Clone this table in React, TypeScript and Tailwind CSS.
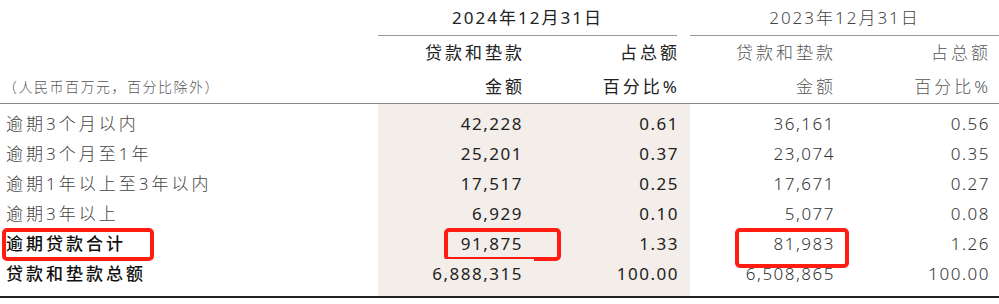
const ROWS = [
  { label: "逾期3个月以内", a: "42,228", b: "0.61", c: "36,161", d: "0.56" },
  { label: "逾期3个月至1年", a: "25,201", b: "0.37", c: "23,074", d: "0.35" },
  { label: "逾期1年以上至3年以内", a: "17,517", b: "0.25", c: "17,671", d: "0.27" },
  { label: "逾期3年以上", a: "6,929", b: "0.10", c: "5,077", d: "0.08" },
  { label: "逾期贷款合计", a: "91,875", b: "1.33", c: "81,983", d: "1.26", strong: true, mark: true },
  { label: "贷款和垫款总额", a: "6,888,315", b: "100.00", c: "6,508,865", d: "100.00", strong: true },
]

const shade = "bg-[#f3eeea]"

export default function App() {
  return (
    <div
      className="w-[999px] bg-white text-[17px] tracking-[3px]"
      style={{ fontFamily: '"Noto Sans", "Noto Sans CJK SC", sans-serif' }}
    >
      {/* 表头 */}
      <div className="grid grid-cols-[378px_156px_156px_156px_153px] border-b border-[#8a8a8a]">
        <div />
        <div className="col-span-2 mr-[13px] flex h-[36px] items-center justify-center border-b border-[#999] tracking-[2px] text-[#222]">
          2024年12月31日
        </div>
        <div className="col-span-2 flex h-[36px] items-center justify-center border-b border-[#999] font-light tracking-[2px] text-[#444]">
          2023年12月31日
        </div>

        <div />
        <div className="flex h-[34px] items-center justify-end pr-[9px] text-[#222]">贷款和垫款</div>
        <div className="flex h-[34px] items-center justify-end pr-[10px] text-[#222]">占总额</div>
        <div className="flex h-[34px] items-center justify-end pr-[10px] font-light text-[#555]">贷款和垫款</div>
        <div className="flex h-[34px] items-center justify-end pr-[8px] font-light text-[#555]">占总额</div>

        <div className="flex h-[33px] items-center pl-[3px] text-[14px] font-light tracking-[1.5px] text-[#555]">
          （人民币百万元，百分比除外）
        </div>
        <div className="flex h-[33px] items-center justify-end pr-[9px] text-[#222]">金额</div>
        <div className="flex h-[33px] items-center justify-end pr-[10px] text-[#222]">百分比%</div>
        <div className="flex h-[33px] items-center justify-end pr-[10px] font-light text-[#555]">金额</div>
        <div className="flex h-[33px] items-center justify-end pr-[8px] font-light text-[#555]">百分比%</div>
      </div>

      {/* 数据 */}
      <div className="grid grid-cols-[378px_156px_156px_156px_153px] border-b-2 border-[#222]">
        <div className="h-[5px]" />
        <div className={`h-[5px] ${shade}`} />
        <div className={`h-[5px] ${shade}`} />
        <div className="h-[5px]" />
        <div className="h-[5px]" />

        {ROWS.map((r) => (
          <div key={r.label} className="contents">
            <div
              className={`relative flex h-[30px] items-center pl-[6px] ${
                r.strong ? "font-medium text-[#111]" : "font-light text-[#444]"
              }`}
            >
              {r.label}
              {r.mark && (
                <div className="absolute left-[2px] top-[-1px] h-[33px] w-[152px] rounded-[5px] border-4 border-[#ff1d12]" />
              )}
            </div>
            <div className={`relative flex h-[30px] items-center justify-end pr-[11px] tracking-[1.5px] text-[#222] ${shade}`}>
              {r.a}
              {r.mark && (
                <div className="absolute left-[66px] top-[-1px] h-[33px] w-[117px] rounded-[5px] border-4 border-[#ff1d12]" />
              )}
            </div>
            <div className={`flex h-[30px] items-center justify-end pr-[11px] tracking-[1.5px] text-[#222] ${shade}`}>
              {r.b}
            </div>
            <div className="relative flex h-[30px] items-center justify-end pr-[11px] font-light tracking-[1.5px] text-[#333]">
              {r.c}
              {r.mark && (
                <div className="absolute left-[45px] top-[-1px] h-[40px] w-[114px] rounded-[5px] border-4 border-[#ff1d12]" />
              )}
            </div>
            <div className="flex h-[30px] items-center justify-end pr-[9px] font-light tracking-[1.5px] text-[#333]">
              {r.d}
            </div>
          </div>
        ))}

        <div className="h-[7px]" />
        <div className={`h-[7px] ${shade}`} />
        <div className={`h-[7px] ${shade}`} />
        <div className="h-[7px]" />
        <div className="h-[7px]" />
      </div>
    </div>
  )
}
